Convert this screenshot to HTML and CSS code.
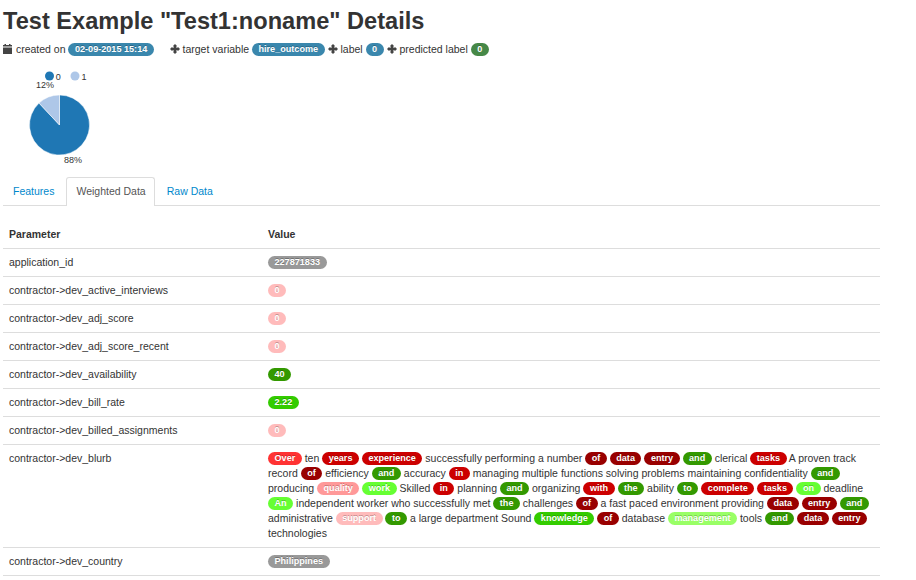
FILE: index.html
```html
<!DOCTYPE html>
<html lang="en">
<head>
    <meta charset="UTF-8">
    <title>Test Example Details</title>
    <link rel="stylesheet" href="styles.css">
</head>
<body>
    <h2 class="title">Test Example "Test1:noname" Details</h2>

    <div class="meta">
        <svg class="icon icon-cal" width="9" height="10" viewBox="0 0 9 10"><path d="M0 3.500h9V10H0zM0 1h1.500V0h1.500v1h3V0h1.500v1H9v1.500H0z" fill="#444"/></svg>
        created on <span class="badge badge-info">02-09-2015 15:14</span>
        <span class="meta-gap"></span>
        <svg class="icon" width="10" height="10" viewBox="0 0 10 10"><path d="M5 0L7 2 6 3 7 4 8 3 10 5 8 7 7 6 6 7 7 8 5 10 3 8 4 7 3 6 2 7 0 5 2 3 3 4 4 3 3 2z" fill="#444"/></svg>
        target variable <span class="badge badge-info">hire_outcome</span>
        <svg class="icon" width="10" height="10" viewBox="0 0 10 10"><path d="M5 0L7 2 6 3 7 4 8 3 10 5 8 7 7 6 6 7 7 8 5 10 3 8 4 7 3 6 2 7 0 5 2 3 3 4 4 3 3 2z" fill="#444"/></svg>
        label <span class="badge badge-info">0</span>
        <svg class="icon" width="10" height="10" viewBox="0 0 10 10"><path d="M5 0L7 2 6 3 7 4 8 3 10 5 8 7 7 6 6 7 7 8 5 10 3 8 4 7 3 6 2 7 0 5 2 3 3 4 4 3 3 2z" fill="#444"/></svg>
        predicted label <span class="badge badge-success">0</span>
    </div>

    <svg class="chart" width="120" height="106" viewBox="0 0 120 106">
        <circle cx="46.500" cy="14" r="4.500" fill="#1f77b4"/>
        <text x="52.700" y="17.500">0</text>
        <circle cx="72" cy="14" r="4.500" fill="#aec7e8"/>
        <text x="78.500" y="17.500">1</text>
        <text x="33" y="26">12%</text>
        <path d="M56.500 33 A30 30 0 1 1 36 41.100 L56.500 63 Z" fill="#1f77b4" stroke="#fff" stroke-width="0.500"/>
        <path d="M36 41.100 A30 30 0 0 1 56.500 33 L56.500 63 Z" fill="#aec7e8" stroke="#fff" stroke-width="0.500"/>
        <text x="61" y="100.500">88%</text>
    </svg>

    <ul class="tabs">
        <li><a href="#">Features</a></li>
        <li class="active"><a href="#">Weighted Data</a></li>
        <li><a href="#">Raw Data</a></li>
    </ul>

    <table class="params">
        <thead>
            <tr><th class="col-name">Parameter</th><th>Value</th></tr>
        </thead>
        <tbody>
            <tr><td>application_id</td><td><span class="badge w-gray">227871833</span></td></tr>
            <tr><td>contractor-&gt;dev_active_interviews</td><td><span class="badge w-pale">0</span></td></tr>
            <tr><td>contractor-&gt;dev_adj_score</td><td><span class="badge w-pale">0</span></td></tr>
            <tr><td>contractor-&gt;dev_adj_score_recent</td><td><span class="badge w-pale">0</span></td></tr>
            <tr><td>contractor-&gt;dev_availability</td><td><span class="badge w-green">40</span></td></tr>
            <tr><td>contractor-&gt;dev_bill_rate</td><td><span class="badge w-lime">2.22</span></td></tr>
            <tr><td>contractor-&gt;dev_billed_assignments</td><td><span class="badge w-pale">0</span></td></tr>
            <tr>
                <td>contractor-&gt;dev_blurb</td>
                <td>
                    <span class="badge w-bright">Over</span> ten <span class="badge w-red">years</span> <span class="badge w-red">experience</span> successfully performing a number <span class="badge w-dark">of</span> <span class="badge w-dark">data</span> <span class="badge w-dark">entry</span> <span class="badge w-green">and</span> clerical <span class="badge w-red">tasks</span> A proven track
                    record <span class="badge w-dark">of</span> efficiency <span class="badge w-green">and</span> accuracy <span class="badge w-red">in</span> managing multiple functions solving problems maintaining confidentiality <span class="badge w-green">and</span>
                    producing <span class="badge w-rose">quality</span> <span class="badge w-neon">work</span> Skilled <span class="badge w-red">in</span> planning <span class="badge w-green">and</span> organizing <span class="badge w-red">with</span> <span class="badge w-green">the</span> ability <span class="badge w-green">to</span> <span class="badge w-red">complete</span> <span class="badge w-red">tasks</span> <span class="badge w-neon">on</span> deadline
                    <span class="badge w-neon">An</span> independent worker who successfully met <span class="badge w-green">the</span> challenges <span class="badge w-dark">of</span> a fast paced environment providing <span class="badge w-dark">data</span> <span class="badge w-dark">entry</span> <span class="badge w-green">and</span>
                    administrative <span class="badge w-pale">support</span> <span class="badge w-green">to</span> a large department Sound <span class="badge w-lime">knowledge</span> <span class="badge w-dark">of</span> database <span class="badge w-mint">management</span> tools <span class="badge w-green">and</span> <span class="badge w-dark">data</span> <span class="badge w-dark">entry</span>
                    technologies
                </td>
            </tr>
            <tr><td>contractor-&gt;dev_country</td><td><span class="badge w-gray">Philippines</span></td></tr>
        </tbody>
    </table>
</body>
</html>
```
FILE: styles.css
```css
body {
    margin: 0;
    padding: 0 36px 0 3px;
    font-family: "Liberation Sans", Arial, sans-serif;
    font-size: 10.500px;
    line-height: 15px;
    color: #333;
    background: #fff;
}
.title {
    margin: 0;
    padding-top: 6px;
    font-size: 23.600px;
    line-height: 30px;
    font-weight: bold;
}
.meta {
    margin-top: 6px;
    height: 15px;
    white-space: nowrap;
}
.meta-gap {
    display: inline-block;
    width: 10px;
}
.icon {
    vertical-align: -1px;
}
.icon-cal {
    margin-right: 1px;
}
.badge {
    display: inline-block;
    padding: 1px 6.500px 2px;
    margin-bottom: -1px;
    border-radius: 9px;
    font-size: 9.100px;
    line-height: 10px;
    font-weight: bold;
    color: #fff;
    vertical-align: 1px;
    white-space: nowrap;
    text-shadow: 0 -1px 0 rgba(0, 0, 0, 0.25);
}
.badge-info { background: #3a87ad; }
.badge-success { background: #468847; }
.w-gray { background: #999; }
.w-pale { background: #ffbbbb; }
.w-rose { background: #ff9999; }
.w-bright { background: #ff3333; }
.w-red { background: #cc0000; }
.w-dark { background: #990000; }
.w-green { background: #339900; }
.w-lime { background: #33cc00; }
.w-neon { background: #66ff33; }
.w-mint { background: #99ff66; }

.chart {
    display: block;
    margin-top: 5px;
}
.chart text {
    font-size: 9px;
    fill: #333;
}
.tabs {
    display: flex;
    list-style: none;
    margin: 9px 0 0;
    padding: 0;
    border-bottom: 1px solid #ddd;
}
.tabs a {
    display: block;
    padding: 6px 9px;
    border: 1px solid transparent;
    border-bottom: 0;
    border-radius: 3px 3px 0 0;
    color: #0088cc;
    text-decoration: none;
    margin-right: 2px;
}
.tabs .active a {
    color: #555;
    background: #fff;
    border-color: #ddd;
    margin-bottom: -1px;
    padding: 6px 8px 7px 9px;
}
.params {
    width: 100%;
    margin-top: 14px;
    border-collapse: collapse;
}
.params th,
.params td {
    padding: 6px;
    text-align: left;
    vertical-align: top;
    border-bottom: 1px solid #ddd;
}
.params th {
    font-weight: bold;
    padding: 7px 6px 6px;
}
.col-name {
    width: 247px;
}
```
